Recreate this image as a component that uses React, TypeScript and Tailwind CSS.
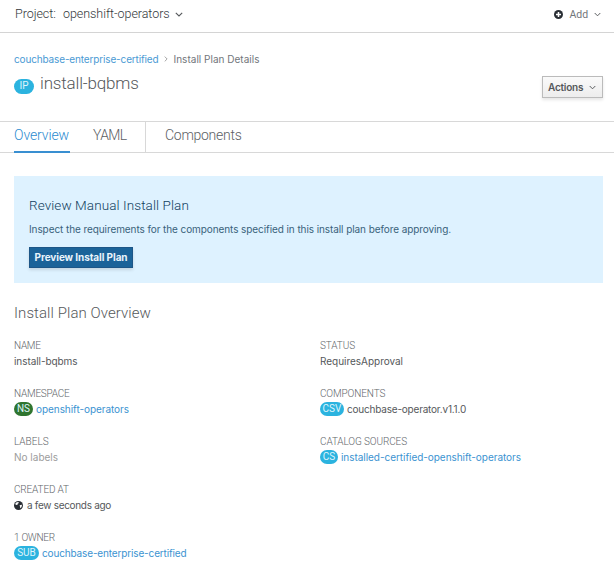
import type { ReactNode } from "react";

function Chevron({ className }: { className: string }) {
  return (
    <svg viewBox="0 0 8 5" className={className} fill="none" stroke="currentColor" strokeWidth="1.1">
      <path d="M0.8 0.8 4 4 7.2 0.8" />
    </svg>
  );
}

function Badge({ label, className }: { label: string; className: string }) {
  return (
    <span
      className={
        "flex h-[14px] shrink-0 items-center justify-center rounded-full font-[Roboto] text-[10px] leading-none text-[#dff4fb] " +
        className
      }
    >
      {label}
    </span>
  );
}

function Field({ label, labelClass, children }: { label: string; labelClass: string; children: ReactNode }) {
  return (
    <div className="h-12">
      <dt className={"h-4 pt-px font-[Roboto] text-[10px] leading-4 font-light text-[#62666a] " + labelClass}>{label}</dt>
      <dd className="flex h-4 items-center text-[10px] leading-4">{children}</dd>
    </div>
  );
}

export default function App() {
  return (
    <div className="h-[567px] w-[614px] overflow-hidden bg-white font-[Inter,sans-serif] whitespace-nowrap text-[#55585b]">
      <header className="flex h-[33px] items-center border-b border-[#d4d4d4] pr-[13px] pb-[3px] pl-[15px] font-[Roboto]">
        <span className="w-12 text-[12.5px] font-light tracking-[-0.05px] text-[#33373b]">Project:</span>
        <span className="w-[106px] text-[12.5px] font-light tracking-[-0.05px] text-[#33373b]">openshift-operators</span>
        <Chevron className="ml-[6px] h-[5px] w-[8px]" />
        <svg viewBox="0 0 10 10" className="ml-auto size-[9px]">
          <circle cx="5" cy="5" r="5" fill="#292e34" />
          <path d="M5 2.2v5.6M2.2 5h5.6" stroke="white" strokeWidth="1.7" />
        </svg>
        <span className="ml-[6.5px] text-[10.5px] tracking-[-0.1px] text-[#72767b]">Add</span>
        <Chevron className="ml-[6px] h-[5px] w-[7px]" />
      </header>

      <div className="h-[88px] pt-[18px] pr-[11px] pl-[14px]">
        <nav className="flex h-4 items-center text-[10px]">
          <a className="w-[144.5px] tracking-[-0.146px] text-[#4a9ad4]">couchbase-enterprise-certified</a>
          <svg viewBox="0 0 5 8" className="mr-[6px] ml-[5px] h-[6px] w-[4px]" fill="none" stroke="#9c9c9c" strokeWidth="1.2">
            <path d="M0.8 0.8 4 4 0.8 7.2" />
          </svg>
          <span className="tracking-[0.014px] text-[#72767b]">Install Plan Details</span>
        </nav>
        <div className="flex items-start">
          <Badge label="IP" className="mt-[12px] h-[15px] w-[20px] bg-[#2bb3df] pb-px" />
          <h1 className="mt-[5px] ml-[6px] font-[Roboto] text-[17px] leading-[22px] font-light tracking-[-0.17px]">
            install-bqbms
          </h1>
          <button className="mt-[9px] ml-auto flex h-[22px] w-[61px] items-center border border-[#bbb] bg-gradient-to-b from-[#fafafa] to-[#ededed] pl-[5px] shadow-[0_2px_3px_rgba(3,3,3,0.1)]">
            <span className="text-[10px] font-semibold tracking-[-0.22px]">Actions</span>
            <Chevron className="ml-[6px] h-[5px] w-[7px]" />
          </button>
        </div>
      </div>

      <nav className="flex h-8 border-y border-[#d8d8d8] pl-[14px] font-[Roboto] text-[14px] leading-[26px] font-light text-[#5c6064]">
        <a className="-mb-px h-[31px] w-[56px] border-b-2 border-[#398fd1] tracking-[-0.1px] text-[#2b8bd0]">Overview</a>
        <a className="ml-[23px] w-[53px] border-r border-[#d8d8d8] tracking-[-0.6px]">YAML</a>
        <a className="ml-[19px] tracking-[-0.27px]">Components</a>
      </nav>

      <section className="mt-[23px] mr-[11px] ml-[14px] h-[107px] bg-[#def2ff] pt-[20px] pl-[15px] text-[#39627b]">
        <h2 className="font-[Roboto] text-[13.5px] leading-[18px] font-light tracking-[0.09px] text-[#10405e]">
          Review Manual Install Plan
        </h2>
        <p className="mt-[7px] text-[10px] leading-4 tracking-[-0.085px]">
          Inspect the requirements for the components specified in this install plan before approving.
        </p>
        <button className="mt-[10px] flex h-[21px] w-[104px] items-center justify-center border border-[#1d5687] bg-[#1b6399] text-[10px] font-bold tracking-[-0.082px] text-[#e9f4fc] shadow-[0_2px_3px_rgba(3,3,3,0.12)]">
          Preview Install Plan
        </button>
      </section>

      <h2 className="mt-[19px] ml-[14px] h-[22px] font-[Roboto] text-[15px] leading-[22px] font-light tracking-[0.069px]">
        Install Plan Overview
      </h2>

      <div className="mt-[13px] flex pl-[14px]">
        <dl className="w-[306px]">
          <Field label="NAME" labelClass="tracking-[-0.3px]">
            <span className="tracking-[-0.07px]">install-bqbms</span>
          </Field>
          <Field label="NAMESPACE" labelClass="tracking-[-0.231px]">
            <Badge label="NS" className="w-[19px] bg-[#2f752f]" />
            <a className="ml-[3px] tracking-[-0.056px] text-[#3b93d1]">openshift-operators</a>
          </Field>
          <Field label="LABELS" labelClass="tracking-[0px]">
            <span className="text-[#9c9c9c]">No labels</span>
          </Field>
          <Field label="CREATED AT" labelClass="tracking-[-0.15px]">
            <svg viewBox="0 0 10 10" className="size-[9px]">
              <circle cx="5" cy="5" r="5" fill="#292e34" />
              <path d="M1.3 3.6C1.8 2 3.2 1.1 4.8 1.2L5.4 2.3 4.1 3.1 3.9 4.1 2.8 4.4ZM6.2 4.6 8.7 4.2C9.1 5.8 8.2 7.5 7 8.1L6.7 6.3Z" fill="white" />
            </svg>
            <span className="ml-[4px] tracking-[-0.304px]">a few seconds ago</span>
          </Field>
          <Field label="1 OWNER" labelClass="tracking-[-0.3px]">
            <Badge label="SUB" className="w-[25px] bg-[#2bb3df]" />
            <a className="ml-[3px] tracking-[-0.146px] text-[#3b93d1]">couchbase-enterprise-certified</a>
          </Field>
        </dl>
        <dl>
          <Field label="STATUS" labelClass="tracking-[-0.1px]">
            <span className="tracking-[-0.027px]">RequiresApproval</span>
          </Field>
          <Field label="COMPONENTS" labelClass="tracking-[-0.12px]">
            <Badge label="CSV" className="w-[24px] bg-[#2bb3df]" />
            <span className="ml-[3px] tracking-[-0.201px]">couchbase-operator.v1.1.0</span>
          </Field>
          <Field label="CATALOG SOURCES" labelClass="tracking-[-0.114px]">
            <Badge label="CS" className="w-[18px] bg-[#2bb3df]" />
            <a className="ml-[3px] tracking-[-0.047px] text-[#3b93d1]">installed-certified-openshift-operators</a>
          </Field>
        </dl>
      </div>
    </div>
  );
}
